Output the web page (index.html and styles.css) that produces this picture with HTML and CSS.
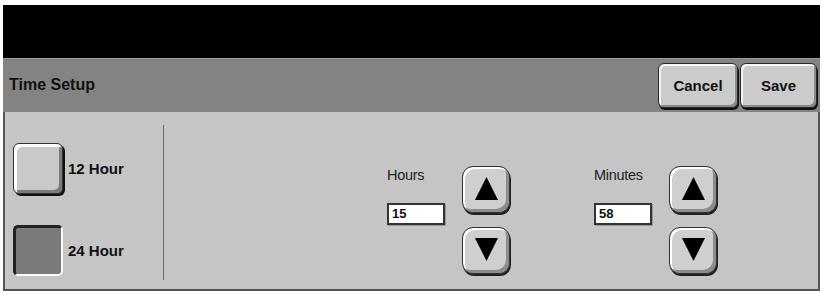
FILE: index.html
```html
<!DOCTYPE html>
<html>
<head>
<meta charset="utf-8">
<link rel="stylesheet" href="styles.css">
</head>
<body>
<div class="screen">
  <div class="topbar"></div>
  <div class="header">
    <div class="title">Time Setup</div>
    <div class="actions">
      <div class="btn cancel">Cancel</div>
      <div class="btn save">Save</div>
    </div>
  </div>
  <div class="content">
    <div class="left">
      <div class="option">
        <div class="choice raised"></div>
        <span class="opt-label">12 Hour</span>
      </div>
      <div class="option">
        <div class="choice pressed"></div>
        <span class="opt-label">24 Hour</span>
      </div>
    </div>
    <div class="divider"></div>
    <div class="right">
      <div class="group">
        <div class="field">
          <div class="label">Hours</div>
          <div class="input">15</div>
        </div>
        <div class="arrows">
          <div class="arrow"><svg width="26" height="26" viewBox="0 0 26 26"><polygon points="13,1 25,25 1,25" fill="#000"/></svg></div>
          <div class="arrow"><svg width="26" height="26" viewBox="0 0 26 26"><polygon points="1,1 25,1 13,25" fill="#000"/></svg></div>
        </div>
      </div>
      <div class="group">
        <div class="field">
          <div class="label">Minutes</div>
          <div class="input">58</div>
        </div>
        <div class="arrows">
          <div class="arrow"><svg width="26" height="26" viewBox="0 0 26 26"><polygon points="13,1 25,25 1,25" fill="#000"/></svg></div>
          <div class="arrow"><svg width="26" height="26" viewBox="0 0 26 26"><polygon points="1,1 25,1 13,25" fill="#000"/></svg></div>
        </div>
      </div>
    </div>
  </div>
</div>
</body>
</html>
```

FILE: styles.css
```css
html, body {
  margin: 0;
  padding: 0;
  background: #ffffff;
}
body {
  font-family: "Liberation Sans", Arial, sans-serif;
  color: #111;
}
.screen {
  margin: 5px 0 0 3px;
  width: 817px;
}
.topbar {
  height: 53px;
  background: #000;
}
.header {
  height: 54px;
  box-sizing: border-box;
  background: #838383;
  border-top: 1px solid #9a9a9a;
  display: flex;
  align-items: flex-start;
  justify-content: space-between;
}
.title {
  font-weight: bold;
  font-size: 16px;
  line-height: 18px;
  margin: 17px 0 0 6px;
  color: #111;
}
.actions {
  display: flex;
  gap: 2px;
  margin: 4px 3px 0 0;
}
.btn {
  height: 45px;
  box-sizing: border-box;
  background: #cbcbcb;
  border: 1px solid #2a2a2a;
  border-radius: 6px;
  box-shadow: inset 2px 2px 0 #f4f4f4, inset -2px -2px 0 #8a8a8a, 1px 2px 0 #111;
  font-weight: bold;
  font-size: 15px;
  display: flex;
  align-items: center;
  justify-content: center;
}
.cancel { width: 80px; }
.save { width: 77px; }
.content {
  height: 179px;
  box-sizing: border-box;
  background: #c5c5c5;
  border-left: 2px solid #555;
  border-right: 2px solid #555;
  border-bottom: 2px solid #555;
  display: flex;
  align-items: flex-start;
}
.left {
  width: 150px;
  padding: 31px 0 0 8px;
  display: flex;
  flex-direction: column;
  gap: 31px;
}
.option {
  display: flex;
  align-items: center;
}
.choice {
  width: 50px;
  height: 51px;
  box-sizing: border-box;
  border-radius: 6px;
  flex: none;
}
.raised {
  background: #c9c9c9;
  border: 1px solid #333;
  box-shadow: inset 3px 3px 0 #ffffff, inset -3px -3px 0 #7a7a7a, 2px 2px 0 #111;
}
.pressed {
  background: #7b7b7b;
  border-top: 3px solid #222;
  border-left: 3px solid #222;
  border-right: 2px solid #fafafa;
  border-bottom: 2px solid #fafafa;
  border-radius: 5px;
}
.opt-label {
  margin-left: 5px;
  font-weight: bold;
  font-size: 15px;
  color: #111;
}
.divider {
  width: 1px;
  height: 155px;
  margin-top: 13px;
  background: #6a6a6a;
}
.right {
  display: flex;
  padding: 54px 0 0 223px;
  gap: 84px;
}
.group {
  display: flex;
}
.field {
  width: 75px;
  display: flex;
  flex-direction: column;
}
.label {
  font-size: 14.5px;
  line-height: 16px;
  margin-top: 1px;
  color: #222;
  letter-spacing: -0.3px;
}
.input {
  margin-top: 20px;
  width: 58px;
  height: 22px;
  box-sizing: border-box;
  background: #fff;
  border: 2px solid #333;
  box-shadow: 1px 1px 0 #999;
  font-weight: bold;
  font-size: 13px;
  line-height: 18px;
  padding-left: 3px;
}
.arrows {
  display: flex;
  flex-direction: column;
  gap: 14px;
}
.arrow {
  width: 48px;
  height: 47px;
  box-sizing: border-box;
  padding-bottom: 3px;
  background: #cfcfcf;
  border: 1px solid #333;
  border-radius: 11px;
  box-shadow: inset 2px 2px 0 #ffffff, inset -3px -3px 0 #8c8c8c, 1px 2px 0 #222;
  display: flex;
  align-items: center;
  justify-content: center;
}
.arrow svg {
  display: block;
  width: 25px;
  height: 25px;
}
```
